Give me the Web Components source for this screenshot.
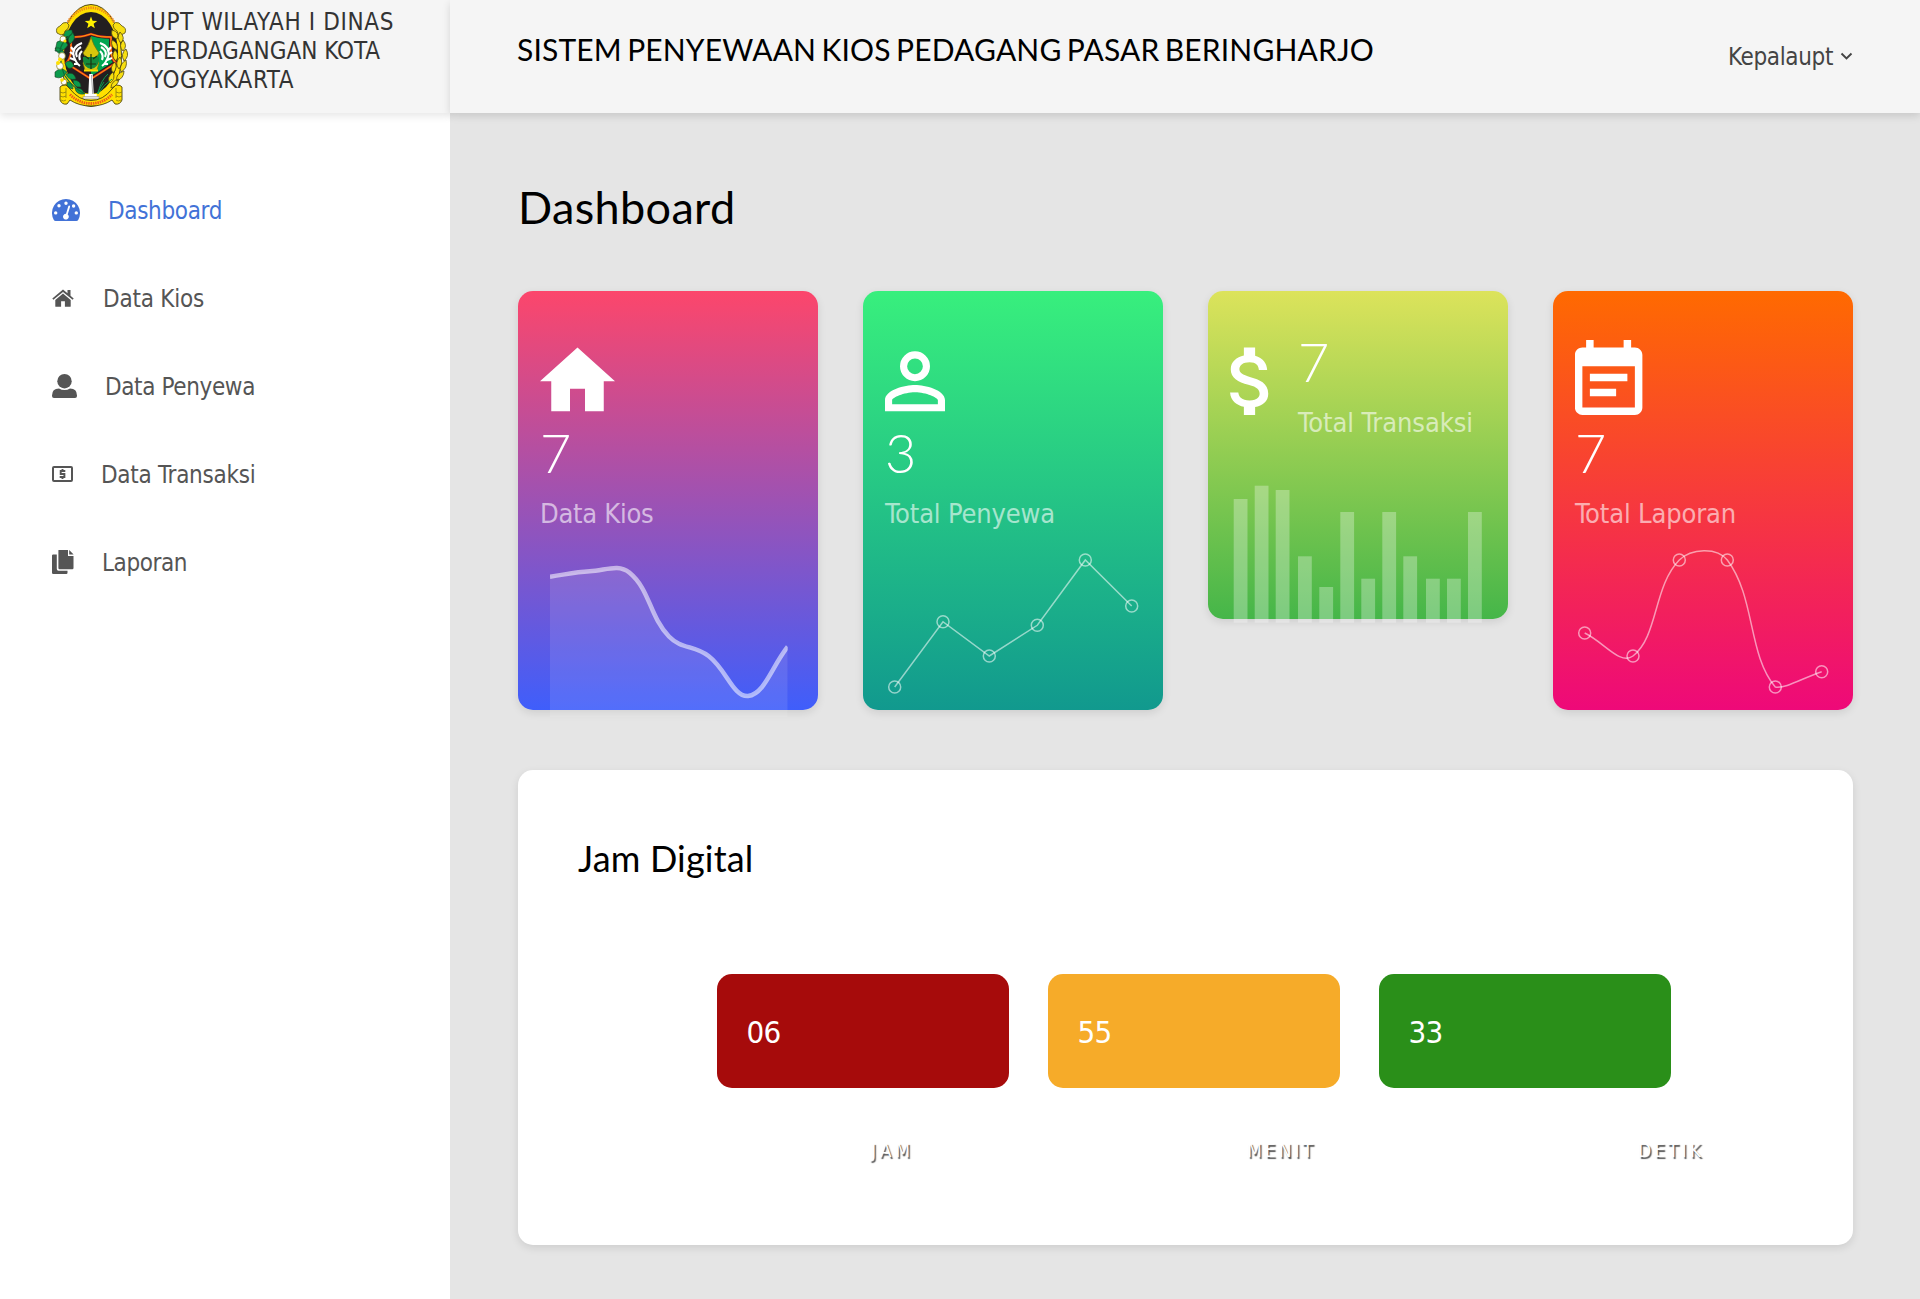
<!DOCTYPE html>
<html lang="id">
<head>
<meta charset="utf-8">
<title>Dashboard</title>
<style>
html,body{margin:0;height:100%}
body{background:#e5e5e5;font-family:"DejaVu Sans Condensed","DejaVu Sans","Noto Sans",sans-serif;font-stretch:condensed;font-size:24px;color:#333;overflow:hidden}
</style>
</head>
<body>
<upt-app></upt-app>
<script>
const define = (name, html, setup) => customElements.define(name, class extends HTMLElement {
  constructor(){
    super();
    const t = document.createElement('template');
    t.innerHTML = html;
    this.attachShadow({mode:'open'}).append(t.content.cloneNode(true));
  }
  connectedCallback(){ if (setup) setup(this, this.shadowRoot); }
});

/* one line of text tracked to a given advance width */
define('fit-text', `<style>:host{display:block;white-space:nowrap}span{display:inline-block}</style><span><slot></slot></span>`, (el, root) => {
  const s = root.querySelector('span'), n = el.textContent.trim().length;
  const w = +el.getAttribute('w');
  s.style.letterSpacing = '0px';
  const natural = s.getBoundingClientRect().width;
  s.style.letterSpacing = ((w - natural) / n).toFixed(3) + 'px';
});

define('city-emblem', `<style>:host{display:block;width:76px;height:106px}svg{display:block}</style>
<svg width="76" height="106" viewBox="0 0 76 106">
  <g fill="#f5d80a" stroke="#3b3510" stroke-width=".9">
    <ellipse cx="38" cy="53.500" rx="30.500" ry="51" fill="#ffe000"/>
  </g>
  <ellipse cx="38" cy="51" rx="27" ry="41" fill="#231f20"/>
  <path d="M15 20C26 1 50 1 61 20" fill="none" stroke="#f08a1c" stroke-width="2.800" stroke-dasharray="1.400 .9"/>
  <path d="M38 14.500l1.600 4.300 4.600.1-3.600 2.900 1.200 4.400-3.800-2.500-3.800 2.500 1.200-4.400-3.600-2.900 4.600-.1z" fill="#fff200"/>
  <path d="M18 35q10 1 20-3 10 4 20 3v15q1 8 5 11-14 9-25 16Q27 70 13 61q4-3 5-11z" fill="#231f20" stroke="#e8251f" stroke-width="2.200"/>
  <path d="M18 35q10 1 20-3 10 4 20 3v15q1 8 5 11-14 9-25 16Q27 70 13 61q4-3 5-11z" fill="none" stroke="#ffe000" stroke-width=".7"/>
  <path d="M38 34q9 3 18 3v14q1 7 4 9-12 8-22 14z" fill="#00a651"/>
  <g fill="none" stroke="#fff" stroke-width="2.100">
    <path d="M29 41q-11 4-8 14 2 6 6 9M28 45q-7 4-4 10M29 49q-4 4-2 9M21 49l-3-4M21 53l-4-3M22 58l-5-2M25 62l-4 0"/>
    <path d="M47 41q11 4 8 14-2 6-6 9M48 45q7 4 4 10M47 49q4 4 2 9M55 49l3-4M55 53l4-3M54 58l5-2M51 62l4 0"/>
  </g>
  <path d="M38 35q2 8 8 16l-3 5 3 5-2 7H32l-2-7 3-5-3-5q6-8 8-16z" fill="#d9c60c" stroke="#77720b" stroke-width=".7"/>
  <path d="M30 55h16v3q-1 8-8 9-7-1-8-9z" fill="#138a3c"/><path d="M38 52v15M32 54l4 3M44 54l-4 3M33 62h10" stroke="#1c3311" stroke-width="1.200"/>
  <path d="M31 67.500h14v2H31z" fill="#ffe000"/>
  <g stroke="#1c4025" stroke-width=".6" fill="#0c9b4d">
    <path d="M11 35q-2-8 8-7 2 7-8 7zM4 40q7-4 11 3-5 8-13 6zM2 46q8-1 9 5-6 3-9-5zM20 31q4 6-3 11-5-5 3-11zM12 61q6-5 9 3-6 6-9-3zM2 70q6-6 12 0-5 8-12 5zM13 72q8-3 10 5-8 2-10-5zM20 78q8 0 8 7-8 1-8-7zM14 80q6 1 6 7-7-1-6-7zM22 86q8-1 9 6-8 1-9-6z"/>
  </g>
  <path d="M20 31Q5 42 7 54q2 15 5 20 8 12 20 18" fill="none" stroke="#0c6b37" stroke-width="1.200"/>
  <g fill="#fff" stroke="#867a11" stroke-width=".7"><circle cx="10" cy="37" r="3"/><circle cx="9" cy="54" r="3.400"/><circle cx="7" cy="64" r="3.400"/><circle cx="11" cy="80" r="2.800"/></g>
  <g fill="#ffe000"><circle cx="7" cy="57.500" r="2"/><circle cx="5" cy="61" r="2"/><circle cx="12" cy="39" r="1.600"/><circle cx="9" cy="78" r="1.800"/></g>
  <g fill="#f7df12" stroke="#574d10" stroke-width=".8">
    <path d="M4 31q-2-5 3-7l3-3q4-2 6 2 0 4-4 6 0 4-4 4z"/><path d="M72 31q2-5-3-7l-3-3q-4-2-6 2 0 4 4 6 0 4 4 4z"/>
    <path d="M59 28q8 2 5 9-7-2-5-9zM67 30q6 6 1 11-5-5-1-11zM59 38q7 3 5 10-7-3-5-10zM70 38q5 6 0 11-5-5 0-11zM62 48q5 5 1 11-6-5-1-11zM73 47q4 7-2 12-4-7 2-12zM67 55q4 6-1 12-5-6 1-12zM73 58q2 8-5 12-3-7 5-12zM62 60q3 6-2 11-4-6 2-11zM71 69q0 7-7 10-2-7 7-10zM60 70q3 7-3 11-4-5 3-11zM66 77q-1 7-8 9 0-7 8-9z"/>
  </g>
  <g fill="none" stroke="#0c9b4d" stroke-width="1"><path d="M55 72q-7 6-10 19M59 77q-9 6-14 15M51 80q-4 6-7 12"/></g>
  <path d="M36.300 72h3.400l1 20h3v4H32v-4h3.300z" fill="#fff"/><path d="M38.500 73l1.200 19" stroke="#a7a7a7" stroke-width="1"/><path d="M30 94.500h16v2.500H30z" fill="#e4e4e4" stroke="#888" stroke-width=".5"/>
  <path d="M7 85q1-2 6-2l4 4q9 11.500 21 11.500t21-11.500l4-4q5 0 6 2v13q-2 5-7 4l-3-4q-9 6-21 6t-21-6l-3 4q-5 1-7-4z" fill="#ffe000" stroke="#4d4510" stroke-width=".9"/>
  <path d="M17 92.500q9 9 21 9t21-9" fill="none" stroke="#ef5a1c" stroke-width="2.800" stroke-dasharray="1.500 .8"/>
  <g fill="none" stroke="#7d7111" stroke-width=".7"><path d="M7 90q3 2 6 0M7 94q3 2 6 0M8 98q3 2 5 0M13 86v10M69 90q-3 2-6 0M69 94q-3 2-6 0M68 98q-3 2-5 0M63 86v10"/></g>
</svg>`);

define('brand-block', `<style>
:host{display:flex;width:450px;height:113px;box-sizing:border-box;background:#f5f5f5;padding:2px 0 0 53px;box-shadow:0 3px 8px rgba(0,0,0,.1);position:relative;z-index:1}
.name{margin:6px 0 0 21px;line-height:29px}
</style><city-emblem></city-emblem>
<div class="name"><fit-text w="244">UPT WILAYAH I DINAS</fit-text><fit-text w="230">PERDAGANGAN KOTA</fit-text><fit-text w="144">YOGYAKARTA</fit-text></div>`);

const navIcons = {
  gauge:[28,22,'0 0 28 22','<path fill-rule="evenodd" d="M14 0a14 14 0 0 1 12.300 20.700q-.6 1.300-2 1.300H3.700q-1.400 0-2-1.300A14 14 0 0 1 14 0zM14 2.500a1.700 1.700 0 1 0 0 3.400 1.700 1.700 0 0 0 0-3.400zM7 5.100a1.700 1.700 0 1 0 0 3.400 1.700 1.700 0 0 0 0-3.400zM3.700 12.200a1.700 1.700 0 1 0 0 3.400 1.700 1.700 0 0 0 0-3.400zM24.300 12.200a1.700 1.700 0 1 0 0 3.400 1.700 1.700 0 0 0 0-3.400zM21.600 5.300a1.700 1.700 0 1 0 .01 3.400 1.700 1.700 0 0 0 0-3.400zM17.300 6.600q-.7-.2-1 .6l-2.300 7.600a2.900 2.900 0 1 0 1.700.6l2.300-7.500q.2-1-.7-1.300z"/>'],
  home:[22,18,'0 0 22 18','<path d="M11 .5L.3 9.500l1.100 1.300L11 2.900l9.600 7.900 1.100-1.300-3.200-2.700V1h-3v3.300z"/><path d="M11 4.600l-7.700 6.300v6.300q0 .6.6.6h5.200v-5.500h3.800v5.500h5.200q.6 0 .6-.6v-6.300z"/>'],
  user:[25,24,'0 0 25 24','<circle cx="12.500" cy="7.200" r="7.200"/><path d="M7 14.600q2.500 1.500 5.500 1.500t5.500-1.500q7 0 7 7V22q0 2-2 2H2q-2 0-2-2v-.4q0-7 7-7z"/>'],
  money:[21,16,'0 0 21 16','<path fill-rule="evenodd" d="M2 0h17q2 0 2 2v12q0 2-2 2H2q-2 0-2-2V2q0-2 2-2zM2 2v12h17V2z"/><path fill="none" stroke="currentColor" stroke-width="1.900" d="M13.300 5H8.700v3h3.700v3H7.700M10.500 3v2M10.500 11v2"/>'],
  files:[22,24,'0 0 22 24','<path d="M6.500 0H16v6h5.500v12q0 1.200-1.200 1.200H7.600q-1.200 0-1.200-1.200V1.200Q6.400 0 6.500 0z"/><path d="M17.200 0L21.600 4.600h-4.400zM0 5.600Q0 4.500 1.200 4.500h3.600V19q0 1.700 1.700 1.700h9v2q0 1.300-1.200 1.300H1.200Q0 24 0 22.800z"/>']
};
define('nav-item', `<style>
:host{display:flex;align-items:center;height:88px;color:#555}
:host([active]){color:#4272d7}
svg{display:block;fill:currentColor;flex:none}
::slotted(fit-text){line-height:30px;margin-top:2px}
</style><svg></svg><slot></slot>`, (el, root) => {
  const [w,h,vb,body] = navIcons[el.getAttribute('icon')], s = root.querySelector('svg');
  s.setAttribute('width',w); s.setAttribute('height',h); s.setAttribute('viewBox',vb); s.innerHTML = body;
  s.style.marginRight = el.getAttribute('gap') + 'px';
});

define('side-bar', `<style>
:host{display:flex;flex-direction:column;width:450px;background:#fff;flex:none}
nav{padding:53px 0 0 52px}
</style><brand-block></brand-block>
<nav>
<nav-item icon="gauge" gap="28" active><fit-text w="114">Dashboard</fit-text></nav-item>
<nav-item icon="home" gap="29"><fit-text w="101">Data Kios</fit-text></nav-item>
<nav-item icon="user" gap="28"><fit-text w="150">Data Penyewa</fit-text></nav-item>
<nav-item icon="money" gap="28"><fit-text w="154.500">Data Transaksi</fit-text></nav-item>
<nav-item icon="files" gap="28"><fit-text w="85">Laporan</fit-text></nav-item>
</nav>`);

define('top-bar', `<style>
:host{display:flex;justify-content:space-between;height:113px;box-sizing:border-box;background:#f5f5f5;padding:0 67px 0 67px;box-shadow:0 3px 8px rgba(0,0,0,.13);position:relative;z-index:2}
.title{font:400 30px/36px Lato,sans-serif;word-spacing:-2.500px;color:#000;margin-top:31px}
.user{display:flex;align-items:center;height:36px;margin-top:39px;gap:7px;color:#444}
svg{display:block;margin-top:-2px}
</style><div class="title"><fit-text w="857">SISTEM PENYEWAAN KIOS PEDAGANG PASAR BERINGHARJO</fit-text></div>
<div class="user"><fit-text w="105">Kepalaupt</fit-text><svg width="13" height="9" viewBox="0 0 13 9" fill="none" stroke="currentColor" stroke-width="1.900"><path d="M1.500 1.500l5 5 5-5"/></svg></div>`);

const cardIcons = {
  home:[75,'2 1 20 20','M10 20v-6h4v6h5v-8h3L12 3 2 12h3v8z'],
  person:[60,'4 1 16 20','M12 13C14.670 13 20 14.330 20 17V20H4V17C4 14.330 9.330 13 12 13M12 4A4 4 0 0 1 16 8 4 4 0 0 1 12 12 4 4 0 0 1 8 8 4 4 0 0 1 12 4M12 14.900C9.030 14.900 5.900 16.360 5.900 17V18.100H18.100V17C18.100 16.360 14.970 14.900 12 14.900M12 5.900A2.100 2.100 0 0 0 9.900 8 2.100 2.100 0 0 0 12 10.100 2.100 2.100 0 0 0 14.100 8 2.100 2.100 0 0 0 12 5.900'],
  dollar:[39,'6.300 1 10.400 20','M11.800 10.900c-2.270-.59-3-1.200-3-2.150 0-1.090 1.010-1.850 2.700-1.850 1.780 0 2.440.85 2.500 2.100h2.210c-.07-1.720-1.120-3.300-3.210-3.810V3h-3v2.160c-1.940.42-3.500 1.680-3.500 3.610 0 2.310 1.910 3.460 4.700 4.130 2.500.6 3 1.480 3 2.410 0 .69-.49 1.790-2.700 1.790-2.060 0-2.870-.92-2.980-2.100h-2.200c.12 2.190 1.760 3.420 3.680 3.830V21h3v-2.150c1.950-.37 3.500-1.500 3.500-3.550 0-2.840-2.430-3.810-4.700-4.400z'],
  note:[68,'3.100 1 18 20','M17 10H7v2h10v-2zm2-7h-1V1h-2v2H8V1H6v2H5c-1.110 0-1.990.9-1.990 2L3 19c0 1.100.89 2 2 2h14c1.100 0 2-.9 2-2V5c0-1.100-.9-2-2-2zm0 16H5V8h14v11zm-5-5H7v2h7v-2z']
};
/* cardinal spline, tension .4, control points kept inside the plot area */
const spline = (p, top, bottom) => {
  const cl = y => Math.max(top, Math.min(bottom, y));
  const cps = p.map((c, i) => {
    const a = p[i-1] || c, b = p[i+1] || c;
    const d0 = Math.hypot(c[0]-a[0], c[1]-a[1]), d1 = Math.hypot(b[0]-c[0], b[1]-c[1]);
    const f0 = .4*d0/(d0+d1), f1 = .4*d1/(d0+d1), dx = b[0]-a[0], dy = b[1]-a[1];
    return [[c[0]-f0*dx, cl(c[1]-f0*dy)], [c[0]+f1*dx, cl(c[1]+f1*dy)]];
  });
  return 'M'+p[0] + p.slice(1).map((c,i) => `C${cps[i][1]} ${cps[i+1][0]} ${c}`).join('');
};
const dots = p => p.map(c => `<circle cx="${c[0]}" cy="${c[1]}" r="6"/>`).join('');
const thin = (d, p) => `<g fill="none" stroke="#fff" stroke-opacity=".55" stroke-width="1.500"><path d="${d}"/>${dots(p)}</g>`;
const charts = {
  area(){
    const d = spline([[32,285.700],[71.700,280.300],[111.300,281.500],[151,345.500],[190.600,365],[230,405],[269.700,355.700]], 256, 406);
    return `<clipPath id="c"><path d="M32 240h237.700v190H32z"/></clipPath><g clip-path="url(#c)"><path d="${d}V426H32z" fill="#fff" fill-opacity=".1"/><path d="${d}" fill="none" stroke="#fff" stroke-opacity=".55" stroke-width="4.500"/></g>`;
  },
  line(){
    const p = [[31.700,396],[80,330.700],[126.300,365],[174.300,334.300],[222.300,269],[268.700,315]];
    return thin('M'+p.join('L'), p);
  },
  curve(){
    const p = [[31.700,342],[80,365],[126.300,269],[174.300,269],[222.300,396],[268.700,380.700]];
    return thin(spline(p, 256, 398), p);
  },
  bars(){
    const x = [131,194,257,324,388,451,514,577,640,708,771,834], y = [657,617,630,829,921,696,896,696,829,896,896,696];
    return '<g fill="#fff" fill-opacity=".3">' + x.map((v,i) => `<rect x="${((v-54)/3).toFixed(1)}" y="${((y[i]-33)/3).toFixed(1)}" width="13.800" height="${((1028-y[i])/3).toFixed(1)}"/>`).join('') + '</g>';
  }
};
define('stat-card', `<style>
:host{display:flex;flex-direction:column;width:300px;height:419px;box-sizing:border-box;border-radius:15px;padding-top:49px;background:linear-gradient(to top,var(--from),var(--to));box-shadow:0 3px 8px rgba(0,0,0,.1)}
:host([wide]){height:328px}
.body{display:flex;flex-direction:column;padding-left:22px}
.icon{display:block;fill:#fff;flex:none}
.num{font:300 54px/54px Lato,sans-serif;color:#fff;margin-top:11px}
.label{font-size:27px;line-height:35px;color:rgba(255,255,255,.6);margin-top:16px}
:host([wide]) .body{flex-direction:row}
:host([wide]) .text{margin:-16px 0 0 29px}
.chart{display:block;overflow:visible;flex:none}
</style><div class="body"><svg class="icon" height="75"><path/></svg><div class="text"><div class="num"><slot name="num"></slot></div><div class="label"><slot></slot></div></div></div><svg class="chart" width="300"></svg>`, (el, root) => {
  const [w,vb,d] = cardIcons[el.getAttribute('icon')], s = root.querySelector('.icon');
  s.setAttribute('width', w); s.setAttribute('viewBox', vb); s.firstChild.setAttribute('d', d);
  const wide = el.hasAttribute('wide'), c = root.querySelector('.chart');
  const top = wide ? 149 : 240, h = (wide ? 328 : 419) - top;
  c.setAttribute('height', h); c.setAttribute('viewBox', `0 ${top} 300 ${h}`);
  c.innerHTML = charts[el.getAttribute('chart')]();
});

define('clock-tile', `<style>:host{display:flex;align-items:center;width:292px;height:114px;box-sizing:border-box;border-radius:15px;padding:2px 0 0 29.500px;background:var(--c);color:#fff;font-size:31px}</style><slot></slot>`);

define('clock-panel', `<style>
:host{display:flex;flex-direction:column;width:1335px;height:475px;box-sizing:border-box;border-radius:15px;background:#fff;box-shadow:0 3px 8px rgba(0,0,0,.1);padding-top:66px}
h3{font:400 36px/44px Lato,sans-serif;color:#000;margin:0 0 0 60px}
.tiles{display:flex;gap:39px;margin:94px 0 0 199px}
.labels{display:flex;margin:48px 0 0 353px;font-size:19px;line-height:28px;color:#fff;text-shadow:1.500px 1.500px 1px #555}
fit-text+fit-text{margin-left:var(--ml)}
</style><h3><fit-text w="175.500">Jam Digital</fit-text></h3>
<div class="tiles">
<clock-tile style="--c:#a60b0b"><fit-text w="34">06</fit-text></clock-tile>
<clock-tile style="--c:#f6ab29"><fit-text w="34">55</fit-text></clock-tile>
<clock-tile style="--c:#2a8f19"><fit-text w="34">33</fit-text></clock-tile>
</div>
<div class="labels"><fit-text w="43">JAM</fit-text><fit-text w="69" style="--ml:333px">MENIT</fit-text><fit-text w="66" style="--ml:322px">DETIK</fit-text></div>`);

define('upt-app', `<style>
:host{display:flex;width:1920px;height:1299px}
main{display:flex;flex-direction:column;width:1470px}
.content{display:flex;flex-direction:column;padding:66px 0 0 68px}
h2{font:400 45px/56px Lato,sans-serif;color:#000;margin:0}
.cards{display:flex;gap:45px;align-items:flex-start;margin:56px 0 60px}
</style><side-bar></side-bar><main><top-bar></top-bar><div class="content"><h2><fit-text w="217.500">Dashboard</fit-text></h2>
<div class="cards">
<stat-card icon="home" chart="area" style="--from:#3f5efb;--to:#fc466b"><span slot="num">7</span><fit-text w="113.500">Data Kios</fit-text></stat-card>
<stat-card icon="person" chart="line" style="--from:#11998e;--to:#38ef7d"><span slot="num">3</span><fit-text w="170">Total Penyewa</fit-text></stat-card>
<stat-card wide icon="dollar" chart="bars" style="--from:#45b649;--to:#dce35b"><span slot="num">7</span><fit-text w="175">Total Transaksi</fit-text></stat-card>
<stat-card icon="note" chart="curve" style="--from:#ee0979;--to:#ff6a00"><span slot="num">7</span><fit-text w="161">Total Laporan</fit-text></stat-card>
</div><clock-panel></clock-panel></div></main>`);
</script>
</body>
</html>
